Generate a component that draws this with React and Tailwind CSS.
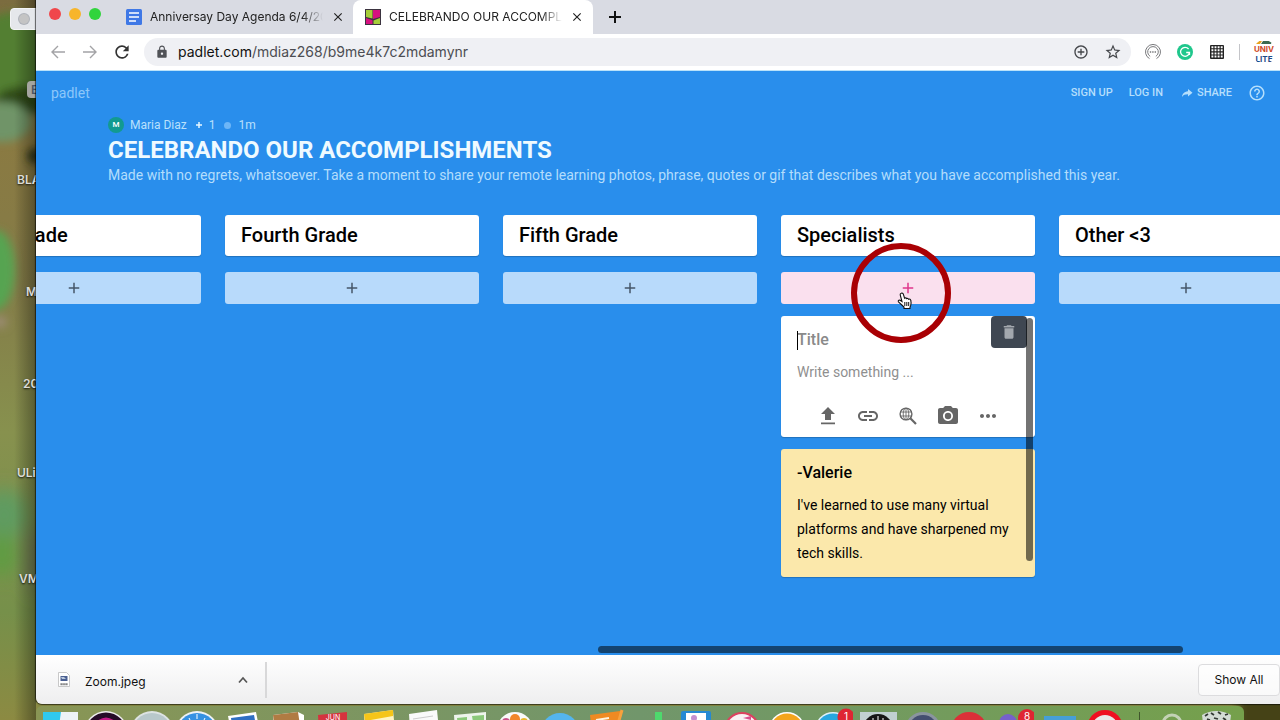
import React from "react";
import {
  MdLock,
  MdRefresh,
  MdAddCircleOutline,
  MdStarBorder,
  MdDelete,
  MdLink,
  MdCameraAlt,
  MdMoreHoriz,
  MdHelpOutline,
  MdClose,
  MdAdd,
} from "react-icons/md";

const iconButton = "flex h-7 w-8 shrink-0 items-center justify-center";

function Wallpaper() {
  return (
    <svg
      className="absolute inset-0 h-full w-full"
      viewBox="0 0 1280 720"
      preserveAspectRatio="none"
      aria-hidden="true"
    >
      <defs>
        <linearGradient id="wall" x1="0" y1="0" x2="0" y2="1">
          <stop offset="0" stopColor="#7b6c3f" />
          <stop offset="0.2" stopColor="#8a7a42" />
          <stop offset="0.4" stopColor="#847c48" />
          <stop offset="0.6" stopColor="#87914e" />
          <stop offset="0.85" stopColor="#76904a" />
          <stop offset="1" stopColor="#8c8a42" />
        </linearGradient>
        <linearGradient id="edge" x1="0" y1="0" x2="1" y2="0">
          <stop offset="0" stopColor="#000" stopOpacity="0" />
          <stop offset="1" stopColor="#000" stopOpacity="0.35" />
        </linearGradient>
        <filter id="soft" x="-50%" y="-50%" width="200%" height="200%">
          <feGaussianBlur stdDeviation="4" />
        </filter>
        <filter id="softer" x="-80%" y="-80%" width="260%" height="260%">
          <feGaussianBlur stdDeviation="9" />
        </filter>
      </defs>
      <rect width="1280" height="720" fill="url(#wall)" />
      <g filter="url(#soft)">
        <ellipse cx="14" cy="58" rx="44" ry="46" fill="#527f32" />
        <ellipse cx="30" cy="100" rx="34" ry="14" fill="#2f4a17" />
        <ellipse cx="2" cy="122" rx="30" ry="20" fill="#6f9468" />
        <ellipse cx="36" cy="156" rx="9" ry="8" fill="#2a3312" />
        <ellipse cx="-4" cy="270" rx="19" ry="40" fill="#56a451" />
        <ellipse cx="0" cy="322" rx="7" ry="6" fill="#9c8c74" />
        <rect x="1238" y="690" width="60" height="40" fill="#454319" />
      </g>
      <g filter="url(#softer)">
        <ellipse cx="4" cy="515" rx="24" ry="26" fill="#5f9b60" />
        <ellipse cx="2" cy="555" rx="16" ry="22" fill="#5f9c42" />
        <ellipse cx="36" cy="560" rx="9" ry="34" fill="#747a5a" />
      </g>
      <rect x="14" y="0" width="22" height="720" fill="url(#edge)" />
    </svg>
  );
}

function Desktop() {
  const label =
    "absolute whitespace-nowrap text-xs font-semibold leading-4 text-[#dcdcd6] [text-shadow:0_1px_2px_rgb(0_0_0/0.8)]";
  return (
    <div className="relative w-9 shrink-0 overflow-hidden">
      <div className="absolute left-[10px] top-2 flex h-[22px] w-12 items-center rounded border border-gray-100 bg-gray-200 pl-[7px]">
        <span className="h-3 w-3 rounded-full border border-gray-400/50 bg-[#c4c4c4]" />
      </div>
      <div className="absolute left-[27px] top-[81px] flex h-[17px] w-8 items-center rounded-sm bg-[#a5a5a0] pl-1 text-xs font-semibold text-gray-600">
        E
      </div>
      <span className={label + " left-[17px] top-[172px]"}>BLA</span>
      <span className={label + " left-[26px] top-[284px]"}>M</span>
      <span className={label + " left-[23px] top-[376px]"}>20</span>
      <span className={label + " left-[17px] top-[465px]"}>ULi</span>
      <span className={label + " left-[19px] top-[571px]"}>VM</span>
    </div>
  );
}

function DocsIcon() {
  return (
    <svg viewBox="0 0 16 16" className="h-4 w-4 shrink-0">
      <rect width="16" height="16" rx="1.5" fill="#3f78e6" />
      <path d="M3 4h10M3 8h10M3 12h7" stroke="#fff" strokeWidth="1.6" />
    </svg>
  );
}

function PadletIcon() {
  return (
    <svg viewBox="0 0 16 16" className="h-4 w-4 shrink-0">
      <rect width="16" height="16" fill="#3b3340" />
      <path d="M1 1h6.500v8.600L1 8z" fill="#a6ce39" />
      <path d="M8 1h7v7l-7 2z" fill="#d6117f" />
      <path d="M1 9l6.500 2.300V15H1z" fill="#d6117f" />
      <path d="M15 9l-6.500 2.500V15H15z" fill="#a6ce39" />
    </svg>
  );
}

function TabBar() {
  const title =
    "min-w-0 flex-1 overflow-hidden whitespace-nowrap text-xs text-[#222] [mask-image:linear-gradient(to_right,#000_88%,transparent)]";
  return (
    <div className="flex h-[34px] shrink-0 bg-[#d9dbe3]">
      <div className="flex h-7 w-[76px] shrink-0 items-center gap-2 pl-[13px]">
        <button aria-label="Close window" className="h-3 w-3 rounded-full bg-[#f0474b]" />
        <button aria-label="Minimize window" className="h-3 w-3 rounded-full bg-[#f7b52b]" />
        <button aria-label="Zoom window" className="h-3 w-3 rounded-full bg-[#30d43c]" />
      </div>
      <div className="flex w-[241px] shrink-0 items-center gap-2 pl-[14px] pr-2">
        <DocsIcon />
        <span className={title}>Anniversay Day Agenda 6/4/2020</span>
        <button aria-label="Close tab" className="text-[#222]">
          <MdClose size={14} />
        </button>
      </div>
      <div className="flex w-60 shrink-0 items-center gap-2 rounded-t-lg bg-white pl-3 pr-[9px]">
        <PadletIcon />
        <span className={title}>CELEBRANDO OUR ACCOMPLISHMENTS</span>
        <button aria-label="Close tab" className="text-[#222]">
          <MdClose size={14} />
        </button>
      </div>
      <button aria-label="New tab" className="ml-3 text-[#111]">
        <svg viewBox="0 0 20 20" className="h-5 w-5" stroke="currentColor" strokeWidth="2">
          <path d="M10 4v12M4 10h12" />
        </svg>
      </button>
    </div>
  );
}

function Toolbar() {
  return (
    <div className="flex h-[37px] shrink-0 items-center border-b border-[#b9e2fa] bg-white pl-1.5">
      <button aria-label="Back" className={iconButton + " text-[#a3a3a6]"}>
        <svg viewBox="0 0 14 14" className="h-3.5 w-3.5" fill="none" stroke="currentColor" strokeWidth="1.4">
          <path d="M14 7H1.500M7 1L1 7l6 6" />
        </svg>
      </button>
      <button aria-label="Forward" className={iconButton + " text-[#a3a3a6]"}>
        <svg viewBox="0 0 14 14" className="h-3.5 w-3.5" fill="none" stroke="currentColor" strokeWidth="1.4">
          <path d="M0 7h12.500M7 1l6 6-6 6" />
        </svg>
      </button>
      <button aria-label="Reload" className={iconButton + " text-[#333]"}>
        <MdRefresh size={20} />
      </button>
      <div className="ml-1.5 flex h-7 min-w-0 flex-1 items-center rounded-full bg-[#eff0f4] pl-[11px] pr-0.5">
        <MdLock size={14} className="shrink-0 text-[#505257]" />
        <div className="ml-[9px] min-w-0 flex-1 whitespace-nowrap text-sm text-[#4c4d52]">
          <span className="text-[#111]">padlet.com</span>/mdiaz268/b9me4k7c2mdamynr
        </div>
        <button aria-label="Zoom" className={iconButton + " text-[#45474b]"}>
          <MdAddCircleOutline size={16} />
        </button>
        <button aria-label="Bookmark" className={iconButton + " text-[#45474b]"}>
          <MdStarBorder size={18} />
        </button>
      </div>
      <div className="ml-1.5 flex shrink-0 items-center">
        <button aria-label="Screencast extension" className={iconButton}>
          <svg viewBox="0 0 16 16" className="h-4 w-4" fill="none" stroke="#77787b">
            <path d="M4.500 14.600a7.500 7.500 0 1 1 7 0" strokeWidth="1" />
            <path d="M5.200 12.400a5.300 5.300 0 1 1 5.600 0" strokeWidth="1" />
            <path d="M4.800 8h6.500" strokeWidth="1.3" strokeDasharray="1.4 1" />
          </svg>
        </button>
        <button aria-label="Grammar extension" className={iconButton}>
          <svg viewBox="0 0 16 16" className="h-4 w-4">
            <circle cx="8" cy="8" r="8" fill="#1fc78c" />
            <path
              d="M11.600 5A4.500 4.500 0 1 0 12.500 8.500H9.200M12.500 8.500v2.600"
              fill="none"
              stroke="#fff"
              strokeWidth="1.3"
            />
          </svg>
        </button>
        <button aria-label="Grid extension" className={iconButton}>
          <svg viewBox="0 0 14 14" className="h-3.5 w-3.5">
            <rect width="14" height="14" rx="1" fill="#222" />
            <path
              d="M2.400 1.200v12M5.500 1.200v12M8.600 1.200v12M11.700 1.200v12"
              stroke="#fff"
              strokeWidth="1.900"
              strokeDasharray="2 1.100"
            />
          </svg>
        </button>
        <span className="mx-1.5 h-4 w-px bg-[#c4c5c9]" />
        <button
          aria-label="Profile"
          className="ml-1.5 mr-1 flex h-6 w-6 flex-col items-center justify-center overflow-hidden rounded-full text-[8px] font-bold leading-[10px]"
        >
          <svg viewBox="0 0 16 3" className="h-[3px] w-4 shrink-0">
            <path d="M0 3l3-3h3L4 3z" fill="#e8a31e" />
            <path d="M5 3l2-3h9l-1 3z" fill="#3b6a50" />
          </svg>
          <span className="text-[#cf4a26]">UNIV</span>
          <span className="text-[#1e4b87]">LITE</span>
        </button>
      </div>
    </div>
  );
}

function PageHeader() {
  const link = "text-[11px] font-medium text-[#b5dffc]";
  return (
    <header>
      <div className="flex h-11 items-center justify-between pl-[15px] pr-3.5">
        <a href="#home" className="text-sm text-[#8dc7fa]">
          padlet
        </a>
        <nav className="flex items-center gap-4">
          <a href="#signup" className={link}>
            SIGN UP
          </a>
          <a href="#login" className={link}>
            LOG IN
          </a>
          <a href="#share" className={link + " ml-0.5 flex items-center gap-1"}>
            <svg viewBox="0 0 12 12" className="h-3 w-3" fill="currentColor">
              <path d="M7 2l4.500 3.800L7 9.500V7.300C4 7.300 2.200 8 1 10c.2-3 2-5.400 6-5.800z" />
            </svg>
            SHARE
          </a>
          <button aria-label="Help" className="text-[#b5dffc]">
            <MdHelpOutline size={18} />
          </button>
        </nav>
      </div>
      <div className="pl-[72px] pr-4">
        <div className="-mt-0.5 flex h-6 items-center text-xs text-[#b9e0fc]">
          <span className="flex h-4 w-4 items-center justify-center rounded-full bg-[#129a90] text-[8px] font-medium text-white">
            M
          </span>
          <span className="ml-1.5">Maria Diaz</span>
          <svg viewBox="0 0 8 8" className="ml-2 h-2 w-2" stroke="#e6f7ff" strokeWidth="1.5">
            <path d="M4 1v6M1 4h6" />
          </svg>
          <span className="ml-1.5">1</span>
          <span className="ml-2 h-[7px] w-[7px] rounded-full bg-[#6db6f7]" />
          <span className="ml-2">1m</span>
        </div>
        <h1 className="text-2xl font-bold leading-[26px] text-[#effaff]">CELEBRANDO OUR ACCOMPLISHMENTS</h1>
        <p className="text-sm leading-6 text-[#b3ddfc]">
          Made with no regrets, whatsoever. Take a moment to share your remote learning photos, phrase, quotes or gif
          that describes what you have accomplished this year.
        </p>
      </div>
    </header>
  );
}

function Pointer() {
  return (
    <svg viewBox="0 0 16 18" className="absolute left-[116px] top-5 z-20 h-[18px] w-4">
      <path
        d="M4.200 1.200c1-.5 1.800 0 2.200 1.200l1.200 3.800c.7-.6 1.700-.4 2 .4.800-.5 1.700-.1 2 .6 1-.4 2 .2 2.200 1.300.5 1.800.5 3.500-.2 5.200l-.6 1.300v1.500H7v-1.500C5.500 13.500 3 11.500 1.500 9.800c-.8-1 .4-2.200 1.600-1.500L5 9.500 3.200 2.800c-.2-.8.200-1.300 1-1.600z"
        fill="#fff"
        stroke="#111"
        strokeWidth="1.100"
      />
      <path d="M7.800 10v4M9.800 10v4M11.700 10v4" stroke="#111" strokeWidth="1" />
    </svg>
  );
}

function Column({ title, active, children }) {
  return (
    <section className="w-[254px] shrink-0">
      <h2 className="h-[41px] rounded-[3px] bg-white px-4 text-xl font-medium leading-10 text-black shadow-[0_1px_1px_rgb(0_0_0/0.2)]">
        {title}
      </h2>
      <div className="relative mt-4">
        <button
          aria-label={"Add post to " + title}
          className={
            "flex h-8 w-full items-center justify-center rounded-[3px] " +
            (active ? "bg-[#fae0ee] text-[#e0368c]" : "bg-[#b8dafb] text-[#45576a]")
          }
        >
          <MdAdd size={18} />
        </button>
        {active && (
          <>
            <span className="pointer-events-none absolute -top-[29px] left-[70px] z-10 h-[100px] w-[100px] rounded-full border-6 border-[#a90004]" />
            <Pointer />
          </>
        )}
      </div>
      {children}
    </section>
  );
}

function SearchWebIcon() {
  return (
    <svg viewBox="0 0 18 18" className="h-[18px] w-[18px]" fill="none" stroke="currentColor">
      <circle cx="7" cy="7" r="5.900" strokeWidth="1.400" />
      <ellipse cx="7" cy="7" rx="2.800" ry="5.800" strokeWidth="0.900" />
      <path d="M7 1v12M1.500 5h11M1.500 9h11" strokeWidth="0.900" />
      <path d="M11.300 11.300l5.700 5.700" strokeWidth="2.200" />
    </svg>
  );
}

function Composer() {
  const tool = "flex h-8 w-10 items-center justify-center";
  return (
    <div className="relative mt-3 h-[121px] rounded-[3px] bg-white px-4 pt-3 shadow-[0_1px_1px_rgb(0_0_0/0.2)]">
      <span className="absolute left-4 top-[15px] h-[19px] w-px bg-black" />
      <input
        aria-label="Title"
        placeholder="Title"
        className="block h-6 w-full text-base font-medium outline-none placeholder:text-[#8a8a8a]"
      />
      <textarea
        aria-label="Body"
        placeholder="Write something ..."
        rows={1}
        className="mt-2 block h-6 w-full resize-none overflow-hidden text-sm leading-6 outline-none placeholder:text-[#8f8f8f]"
      />
      <div className="mt-4 flex justify-center text-[#666]">
        <button aria-label="Upload" className={tool}>
          <svg viewBox="0 0 16 18" className="h-[18px] w-4" fill="currentColor">
            <path d="M8 0l7 7h-4v6H5V7H1zM1 15.500h14v1.800H1z" />
          </svg>
        </button>
        <button aria-label="Link" className={tool}>
          <MdLink size={24} />
        </button>
        <button aria-label="Search" className={tool}>
          <SearchWebIcon />
        </button>
        <button aria-label="Camera" className={tool}>
          <MdCameraAlt size={24} />
        </button>
        <button aria-label="More" className={tool}>
          <MdMoreHoriz size={24} />
        </button>
      </div>
      <button
        aria-label="Delete post"
        className="absolute right-2 top-0 flex h-8 w-9 items-center justify-center rounded bg-[#3f4752] text-[#a3a8ae]"
      >
        <MdDelete size={18} />
      </button>
    </div>
  );
}

function Board() {
  return (
    <main className="flex min-h-0 flex-1 flex-col overflow-hidden bg-[#298eec] font-[Roboto,sans-serif]">
      <PageHeader />
      <div className="-ml-[89px] mt-7 flex gap-6">
        <Column title="Third Grade" />
        <Column title="Fourth Grade" />
        <Column title="Fifth Grade" />
        <Column title="Specialists" active>
          <div className="relative">
            <Composer />
            <article className="mt-3 h-32 rounded-[3px] bg-[#fbe8ab] px-4 pt-3 text-black shadow-[0_1px_1px_rgb(0_0_0/0.2)]">
              <h3 className="text-base font-medium leading-6">-Valerie</h3>
              <p className="mt-2 text-sm leading-6">
                I've learned to use many virtual platforms and have sharpened my tech skills.
              </p>
            </article>
            <span className="absolute bottom-4 right-0.5 top-0.5 w-[7px] rounded-full bg-black/55" />
          </div>
        </Column>
        <Column title="Other <3" />
      </div>
      <div className="mb-0.5 ml-[562px] mr-[97px] mt-auto h-[7px] shrink-0 rounded-full bg-[#14436f]" />
    </main>
  );
}

function DownloadBar() {
  return (
    <footer className="flex h-[49px] shrink-0 items-center justify-between rounded-bl-md bg-linear-to-b from-white to-[#eeeeef]">
      <button className="flex h-9 w-[231px] items-center border-r-2 border-[#d8d8d9] pl-[22px] pr-4 text-xs text-[#111]">
        <svg viewBox="0 0 12 15" className="mr-[15px] h-[15px] w-3 shrink-0">
          <path d="M.5.500h8l3 3v11H.5z" fill="#fff" stroke="#bbb" strokeWidth="0.800" />
          <path d="M2.500 4h7v5h-7z" fill="#4a5f91" />
          <path d="M3 5h3l2 2H4z" fill="#b9c8dd" />
          <path d="M2.500 12.300h7" stroke="#666" strokeWidth="2" strokeDasharray="1.300 .6" />
        </svg>
        <span className="mt-1 flex-1 text-left">Zoom.jpeg</span>
        <svg viewBox="0 0 12 8" className="h-2 w-3" fill="none" stroke="#555" strokeWidth="1.700">
          <path d="M2 6.500l4-4.500 4 4.500" />
        </svg>
      </button>
      <button className="h-8 w-[82px] rounded border border-[#dcdcde] bg-white/60 text-xs text-[#111]">
        Show All
      </button>
    </footer>
  );
}

const dockArt = [
  <><rect x="2" y="6" width="18" height="16" fill="#2fc9ee" /><path d="M20 6h17v14H18z" fill="#edf2f5" /></>,
  <><circle cx="20" cy="27" r="22" fill="#eee" /><circle cx="20" cy="27" r="20.500" fill="#250c28" /><path d="M8 18q12-13 24 0z" fill="#c01a86" /></>,
  <><circle cx="20" cy="27" r="22" fill="#dde3e3" /><circle cx="20" cy="27" r="20" fill="#b8c8cb" /></>,
  <><circle cx="20" cy="27" r="22" fill="#eef2f5" /><circle cx="20" cy="27" r="20" fill="#3591e2" /><path d="M12 12l2 4M20 8v5M28 12l-2 4" stroke="#fff" /></>,
  <><path d="M5 10l28-4 4 20H8z" fill="#fff" /><path d="M8 12l23-3 3 16H10z" fill="#2f6fc4" /></>,
  <><path d="M5 9l25-3 6 3v18H6z" fill="#fff" /><path d="M5 9l25-3 3 20H7z" fill="#b07b43" /></>,
  <><path d="M5 9l29-3v20H6z" fill="#d5333e" /><text x="20" y="14" textAnchor="middle" fontSize="7" fill="#fff">JUN</text></>,
  <><path d="M5 8l29-4 2 20H6z" fill="#fff4c2" /><path d="M5 8l29-4v6L6 15z" fill="#f5c518" /></>,
  <><path d="M5 8l28-4 2 20H6z" fill="#fafafa" /><path d="M9 13l20-3" stroke="#ccc" /></>,
  <><path d="M4 9l32-3v20H5z" fill="#eef4ec" /><path d="M7 12l10-1v10H8zM22 10l12-1v6l-11 1z" fill="#8bc87a" /></>,
  <><circle cx="20" cy="24" r="18" fill="#fafafa" /><ellipse cx="20" cy="13" rx="5" ry="5" fill="#f2872b" /><circle cx="11" cy="16" r="4" fill="#c9518a" /><circle cx="29" cy="16" r="4" fill="#e9b72c" /></>,
  <circle cx="20" cy="26" r="19" fill="#54b5ee" />,
  <><path d="M4 9l30-4v20H6z" fill="#ef8a22" /><path d="M10 14l13-2" stroke="#fff3df" strokeWidth="2" /><path d="M36 4l-4 14" stroke="#f8a13c" strokeWidth="3" /></>,
  <><rect x="24" y="6" width="7" height="20" fill="#4ed96d" /></>,
  <><rect x="5" y="5" width="30" height="20" rx="2" fill="#2589d3" /><rect x="10" y="7" width="20" height="10" fill="#fff" /><circle cx="18" cy="12" r="3" fill="#c58fd0" /></>,
  <><circle cx="20" cy="24" r="18" fill="#dc415f" /><circle cx="20" cy="24" r="16" fill="#faf1f4" /><path d="M21 12l8-2v4z" fill="#d94d8d" /></>,
  <><circle cx="20" cy="24" r="18" fill="#fff" /><circle cx="20" cy="24" r="16.500" fill="#f4a51d" /></>,
  <><circle cx="20" cy="24" r="18" fill="#dff1fa" /><circle cx="20" cy="24" r="16.500" fill="#28a7df" /><circle cx="33" cy="11" r="8.500" fill="#df2532" /><text x="33" y="14" textAnchor="middle" fontSize="10" fill="#fff">1</text></>,
  <><rect x="2" y="6" width="37" height="20" fill="#c1d0d1" /><circle cx="20" cy="23" r="15" fill="#161616" /><path d="M15 12v3M20 10v4M25 12v3" stroke="#fff" /></>,
  <><circle cx="20" cy="24" r="18" fill="#8a949f" /><circle cx="20" cy="24" r="15" fill="#444e70" /></>,
  <circle cx="20" cy="24" r="18" fill="#db3038" />,
  <><circle cx="14" cy="17" r="9" fill="#7661cc" /><circle cx="33" cy="12" r="9" fill="#df2532" /><text x="33" y="14" textAnchor="middle" fontSize="10" fill="#fff">8</text></>,
  <rect x="4" y="10" width="32" height="20" fill="#469fd7" />,
  <><circle cx="20" cy="22" r="18" fill="#ef1021" /><circle cx="20" cy="22" r="13" fill="#e9e9e9" /></>,
];

function Dock() {
  const art = "h-10 w-10 shrink-0";
  return (
    <div className="mr-9 mt-0.5 flex h-3.5 shrink-0 items-start overflow-hidden rounded-t-md bg-linear-to-r from-[#899554] via-[#71966b] to-[#75a04b]">
      <div className="flex min-w-0 flex-1 justify-between pl-[5px]">
        {dockArt.map((drawing, i) => (
          <svg key={i} viewBox="0 0 40 40" className={art} aria-hidden="true">
            {drawing}
          </svg>
        ))}
      </div>
      <span className="ml-3.5 mt-1.5 h-3 w-px bg-[#40562c]" />
      <div className="flex gap-1 pl-3 pr-2">
        <svg viewBox="0 0 40 40" className={art} aria-hidden="true">
          <circle cx="20" cy="18" r="9" fill="none" stroke="#c3d2b5" strokeWidth="3" />
        </svg>
        <svg viewBox="0 0 40 40" className={art} aria-hidden="true">
          <path d="M6 9q14-8 29 0l-3 25H9z" fill="#d3dbd5" />
          <path
            d="M9 10l3-2M15 7l3 2M22 6l3 2M29 9l3-1M11 13l3 1M18 12l4 1M27 12l3 2"
            fill="none"
            stroke="#323833"
            strokeWidth="1.800"
          />
        </svg>
      </div>
    </div>
  );
}

export default function App() {
  return (
    <div className="relative flex h-screen overflow-hidden font-[Inter,sans-serif]">
      <Wallpaper />
      <Desktop />
      <div className="relative flex min-w-0 flex-1 flex-col">
        <div className="flex min-h-0 flex-1 flex-col rounded-bl-md shadow-[0_0_1px_1px_rgb(0_0_0/0.6)]">
          <TabBar />
          <Toolbar />
          <Board />
          <DownloadBar />
        </div>
        <Dock />
      </div>
    </div>
  );
}
